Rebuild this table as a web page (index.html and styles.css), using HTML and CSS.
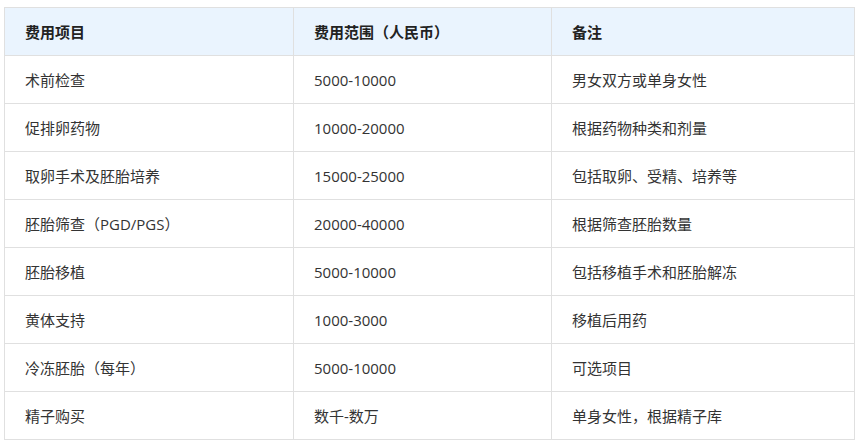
FILE: index.html
```html
<!DOCTYPE html>
<html lang="zh">
<head>
<meta charset="utf-8">
<link rel="stylesheet" href="styles.css">
</head>
<body>
<table class="fee-table">
  <colgroup>
    <col class="c1"><col class="c2"><col class="c3">
  </colgroup>
  <thead>
    <tr><th>费用项目</th><th>费用范围（人民币）</th><th>备注</th></tr>
  </thead>
  <tbody>
    <tr><td>术前检查</td><td>5000-10000</td><td>男女双方或单身女性</td></tr>
    <tr><td>促排卵药物</td><td>10000-20000</td><td>根据药物种类和剂量</td></tr>
    <tr><td>取卵手术及胚胎培养</td><td>15000-25000</td><td>包括取卵、受精、培养等</td></tr>
    <tr><td>胚胎筛查（PGD/PGS）</td><td>20000-40000</td><td>根据筛查胚胎数量</td></tr>
    <tr><td>胚胎移植</td><td>5000-10000</td><td>包括移植手术和胚胎解冻</td></tr>
    <tr><td>黄体支持</td><td>1000-3000</td><td>移植后用药</td></tr>
    <tr><td>冷冻胚胎（每年）</td><td>5000-10000</td><td>可选项目</td></tr>
    <tr><td>精子购买</td><td>数千-数万</td><td>单身女性，根据精子库</td></tr>
  </tbody>
</table>
</body>
</html>
```
FILE: styles.css
```css
html, body {
  margin: 0;
  padding: 0;
  background: #ffffff;
}
body {
  padding: 7px 0 0 4px;
  font-family: "Open Sans", "Noto Sans CJK SC", sans-serif;
  font-size: 15px;
  color: #333333;
}
.fee-table {
  width: 850px;
  border-collapse: collapse;
  table-layout: fixed;
}
.c1 { width: 289px; }
.c2 { width: 258px; }
.c3 { width: 303px; }
.fee-table th,
.fee-table td {
  border: 1px solid #e0e0e0;
  height: 48px;
  padding: 0 20px;
  text-align: left;
  vertical-align: middle;
  line-height: 20px;
  box-sizing: border-box;
}
.fee-table th {
  background: #eaf4fe;
  font-weight: bold;
  color: #222222;
}
```
